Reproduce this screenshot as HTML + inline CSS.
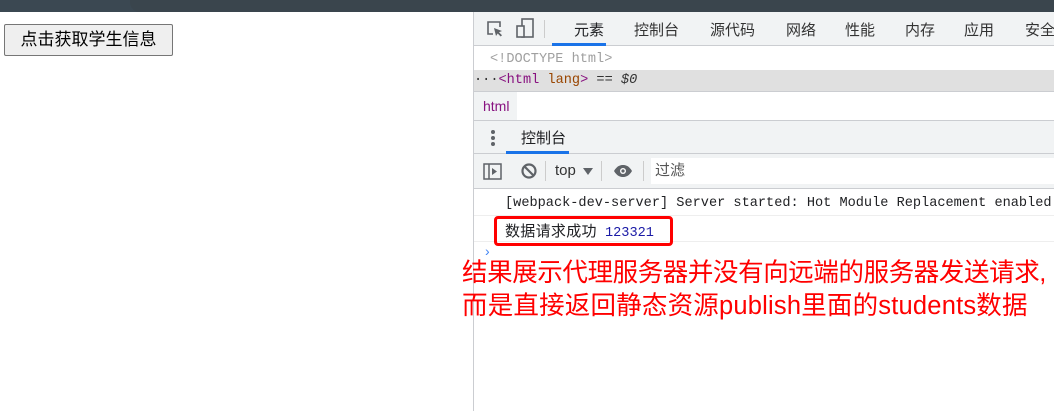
<!DOCTYPE html>
<html><head><meta charset="utf-8"><style>
*{margin:0;padding:0;box-sizing:border-box}
body{width:1054px;height:411px;overflow:hidden;background:#fff;position:relative;font-family:"Liberation Sans","Noto Sans CJK SC",sans-serif}
.a{position:absolute}
.mono{font-family:"Liberation Mono","Noto Sans CJK SC",monospace}
</style></head><body>
<div class="a" style="left:0;top:0;width:1054px;height:12px;background:#3b4852"></div>
<div class="a" style="left:130px;top:0;width:924px;height:12px;background:#3a454d;border-bottom-left-radius:10px"></div>
<div class="a" style="left:4px;top:24px;width:169px;height:32px;background:#efefef;border:1px solid #767676;border-radius:2px;font-size:17px;line-height:30px;text-align:center;color:#000">点击获取学生信息</div>

<div class="a" style="left:473px;top:12px;width:1px;height:399px;background:#cbcdd1"></div>
<div class="a" style="left:474px;top:12px;width:580px;height:399px;background:#fff">
 <div class="a" style="left:0;top:0;width:580px;height:34px;background:#f1f3f4;border-bottom:1px solid #cbcdd1"></div>
 <svg class="a" style="left:11px;top:7px" width="20" height="20" viewBox="0 0 20 20"><path d="M8 15H3V3h12v5" fill="none" stroke="#5f6368" stroke-width="1.6"/><path d="M9 9l8 3-3 1.2 3 3-1.3 1.3-3-3L11 17z" fill="#5f6368"/></svg>
 <svg class="a" style="left:42px;top:5px" width="20" height="24" viewBox="0 0 20 24"><rect x="6" y="2" width="11" height="18" fill="none" stroke="#5f6368" stroke-width="1.6"/><rect x="1" y="9" width="7" height="11" fill="#f1f3f4" stroke="#5f6368" stroke-width="1.6"/></svg>
 <div class="a" style="left:70px;top:8px;width:1px;height:18px;background:#ccc"></div>
 <div class="a" style="top:7px;left:0;font-size:15px;color:#333;white-space:nowrap">
  <span class="a" style="left:100px;color:#202124">元素</span>
  <span class="a" style="left:160px">控制台</span>
  <span class="a" style="left:236px">源代码</span>
  <span class="a" style="left:312px">网络</span>
  <span class="a" style="left:371px">性能</span>
  <span class="a" style="left:431px">内存</span>
  <span class="a" style="left:490px">应用</span>
  <span class="a" style="left:551px">安全</span>
 </div>
 <div class="a" style="left:78px;top:31px;width:54px;height:3px;background:#1a73e8"></div>
 <div class="a mono" style="left:16px;top:40px;font-size:13.6px;color:#a0a0a0">&lt;!DOCTYPE html&gt;</div>
 <div class="a mono" style="left:0;top:58px;width:580px;height:21px;background:#e0e0e0;font-size:13.6px;line-height:21px;color:#333">···<span style="color:#881280">&lt;html</span> <span style="color:#994500">lang</span><span style="color:#881280">&gt;</span> == <i>$0</i></div>
 <div class="a" style="left:0;top:79px;width:580px;height:1px;background:#cbcdd1"></div>
 <div class="a" style="left:0;top:80px;width:43px;height:28px;background:#f1f3f4;color:#881280;font-size:14px;line-height:28px;padding-left:9px">html</div>
 <div class="a" style="left:0;top:108px;width:580px;height:34px;background:#f1f3f4;border-top:1px solid #cbcdd1;border-bottom:1px solid #cbcdd1"></div>
 <div class="a" style="left:17px;top:118px;width:4px;height:4px;border-radius:2px;background:#5f6368;box-shadow:0 6px #5f6368,0 12px #5f6368"></div>
 <div class="a" style="left:47px;top:115px;font-size:15px;color:#202124">控制台</div>
 <div class="a" style="left:32px;top:139px;width:63px;height:3px;background:#1a73e8"></div>
 <div class="a" style="left:0;top:142px;width:580px;height:35px;background:#f1f3f4;border-bottom:1px solid #cbcdd1"></div>
 <svg class="a" style="left:9px;top:150px" width="20" height="20" viewBox="0 0 20 20"><rect x="1" y="2" width="17" height="15" fill="none" stroke="#5f6368" stroke-width="1.5"/><line x1="6" y1="2" x2="6" y2="17" stroke="#5f6368" stroke-width="1.5"/><path d="M9 6l5 3.5-5 3.5z" fill="#5f6368"/></svg>
 <svg class="a" style="left:46px;top:150px" width="18" height="18" viewBox="0 0 18 18"><circle cx="9" cy="9" r="6.5" fill="none" stroke="#5f6368" stroke-width="2.2"/><line x1="4.5" y1="4.5" x2="13.5" y2="13.5" stroke="#5f6368" stroke-width="2.2"/></svg>
 <div class="a" style="left:71px;top:149px;width:1px;height:20px;background:#ccc"></div>
 <div class="a" style="left:81px;top:150px;font-size:15px;color:#333">top</div>
 <div class="a" style="left:109px;top:156px;border-left:5px solid transparent;border-right:5px solid transparent;border-top:7px solid #5f6368"></div>
 <div class="a" style="left:127px;top:149px;width:1px;height:20px;background:#ccc"></div>
 <svg class="a" style="left:139px;top:152px" width="20" height="14" viewBox="0 0 20 14"><path d="M1 7C4 2 7 1 10 1s6 1 9 6c-3 5-6 6-9 6S4 12 1 7z" fill="#5f6368"/><circle cx="10" cy="7" r="3" fill="#fff"/><circle cx="10" cy="7" r="1.6" fill="#5f6368"/></svg>
 <div class="a" style="left:169px;top:149px;width:1px;height:20px;background:#ccc"></div>
 <div class="a" style="left:177px;top:146px;width:403px;height:26px;background:#fff;font-size:15px;color:#555;line-height:26px;padding-left:4px">过滤</div>
 <div class="a mono" style="left:31px;top:184px;font-size:13.6px;color:#202124;white-space:nowrap">[webpack-dev-server] Server started: Hot Module Replacement enabled</div>
 <div class="a" style="left:0;top:203px;width:580px;height:1px;background:#eee"></div>
 <div class="a mono" style="left:31px;top:208px;font-size:13.6px;color:#202124;white-space:nowrap"><span style="font-size:15px;letter-spacing:0.3px">数据请求成功</span> <span style="color:#1a1aa6">123321</span></div>
 <div class="a" style="left:0;top:229px;width:580px;height:1px;background:#eee"></div>
 <div class="a" style="left:20px;top:204px;width:179px;height:30px;border:3px solid #f00;border-radius:4px"></div>
 <div class="a" style="left:11px;top:231px;font-size:14px;color:#4285f4">›</div>
 <div class="a" style="left:-12px;top:245px;font-size:25.5px;line-height:33px;color:#f00;white-space:nowrap;letter-spacing:-0.4px">结果展示代理服务器并没有向远端的服务器发送请求,<br><span style="letter-spacing:0.2px">而是直接返回静态资源publish里面的students数据</span></div>
</div>
</body></html>
